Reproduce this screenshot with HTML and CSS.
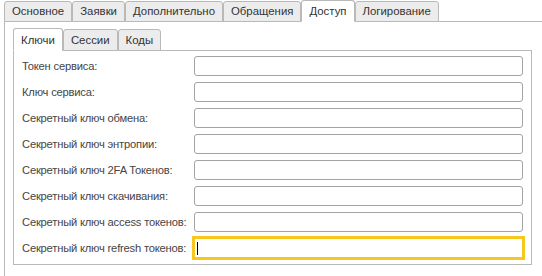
FILE: index.html
```html
<!DOCTYPE html>
<html lang="ru">
<head>
    <meta charset="UTF-8">
    <meta name="viewport" content="width=device-width, initial-scale=1.0">
    <title>Доступ</title>
    <link rel="stylesheet" href="styles.css">
</head>
<body>
    <div class="tabs outer-tabs">
        <div class="tab">Основное</div>
        <div class="tab">Заявки</div>
        <div class="tab">Дополнительно</div>
        <div class="tab">Обращения</div>
        <div class="tab active">Доступ</div>
        <div class="tab">Логирование</div>
    </div>
    <div class="panel outer-panel">
        <div class="tabs inner-tabs">
            <div class="tab active">Ключи</div>
            <div class="tab">Сессии</div>
            <div class="tab">Коды</div>
        </div>
        <div class="panel inner-panel">
            <div class="form">
                <label class="label">Токен сервиса:</label>
                <div class="field"></div>
                <label class="label">Ключ сервиса:</label>
                <div class="field"></div>
                <label class="label">Секретный ключ обмена:</label>
                <div class="field"></div>
                <label class="label">Секретный ключ энтропии:</label>
                <div class="field"></div>
                <label class="label">Секретный ключ 2FA Токенов:</label>
                <div class="field"></div>
                <label class="label">Секретный ключ скачивания:</label>
                <div class="field"></div>
                <label class="label">Секретный ключ access токенов:</label>
                <div class="field"></div>
                <label class="label">Секретный ключ refresh токенов:</label>
                <div class="field focused"><span class="caret"></span></div>
            </div>
        </div>
    </div>
</body>
</html>
```

FILE: styles.css
```css
body{
    margin: 0;
    height: 276px;
    background-color: white;
    font-family: "Liberation Sans", Arial, sans-serif;
    font-size: 11.4px;
    color: #333333;
    overflow: hidden;
}
.tabs{
    display: flex;
    align-items: flex-end;
    position: relative;
    z-index: 1;
    margin-bottom: -1px;
}
.tab{
    box-sizing: border-box;
    height: 21px;
    line-height: 19px;
    padding: 0 7px;
    background-color: #ececec;
    border: 1px solid #b9b9b9;
    border-radius: 3px 3px 0 0;
    color: #333333;
    white-space: nowrap;
}
.tab.active{
    height: 22px;
    line-height: 21px;
    background-color: white;
    border-bottom-color: white;
}
.outer-tabs{
    margin-left: 4px;
}
.panel{
    border: 1px solid #b9b9b9;
}
.outer-panel{
    margin-left: 4px;
    margin-right: -4px;
    height: 248px;
    padding: 6px 0 0 8px;
    border-right: none;
    border-bottom: none;
}
.inner-tabs{
    width: 148px;
}
.inner-tabs .tab{
    height: 22px;
    line-height: 20px;
}
.inner-tabs .tab.active{
    height: 23px;
    line-height: 22px;
}
.inner-panel{
    box-sizing: border-box;
    width: 519px;
    padding: 5px 8px 6px 8px;
}
.form{
    display: grid;
    grid-template-columns: 172px 329px;
    row-gap: 6px;
}
.label{
    height: 20px;
    line-height: 20px;
    font-size: 11.2px;
    letter-spacing: -0.2px;
    color: #454545;
    white-space: nowrap;
}
.field{
    box-sizing: border-box;
    height: 20px;
    border: 1px solid #a3a3a3;
    border-radius: 3px;
    background-color: white;
    display: flex;
    align-items: center;
    padding-left: 2px;
}
.field.focused{
    border-color: #f6c71c;
    border-radius: 0;
    box-shadow: 0 0 0 2px #f6c71c;
}
.caret{
    width: 1px;
    height: 13px;
    background-color: black;
}
```
